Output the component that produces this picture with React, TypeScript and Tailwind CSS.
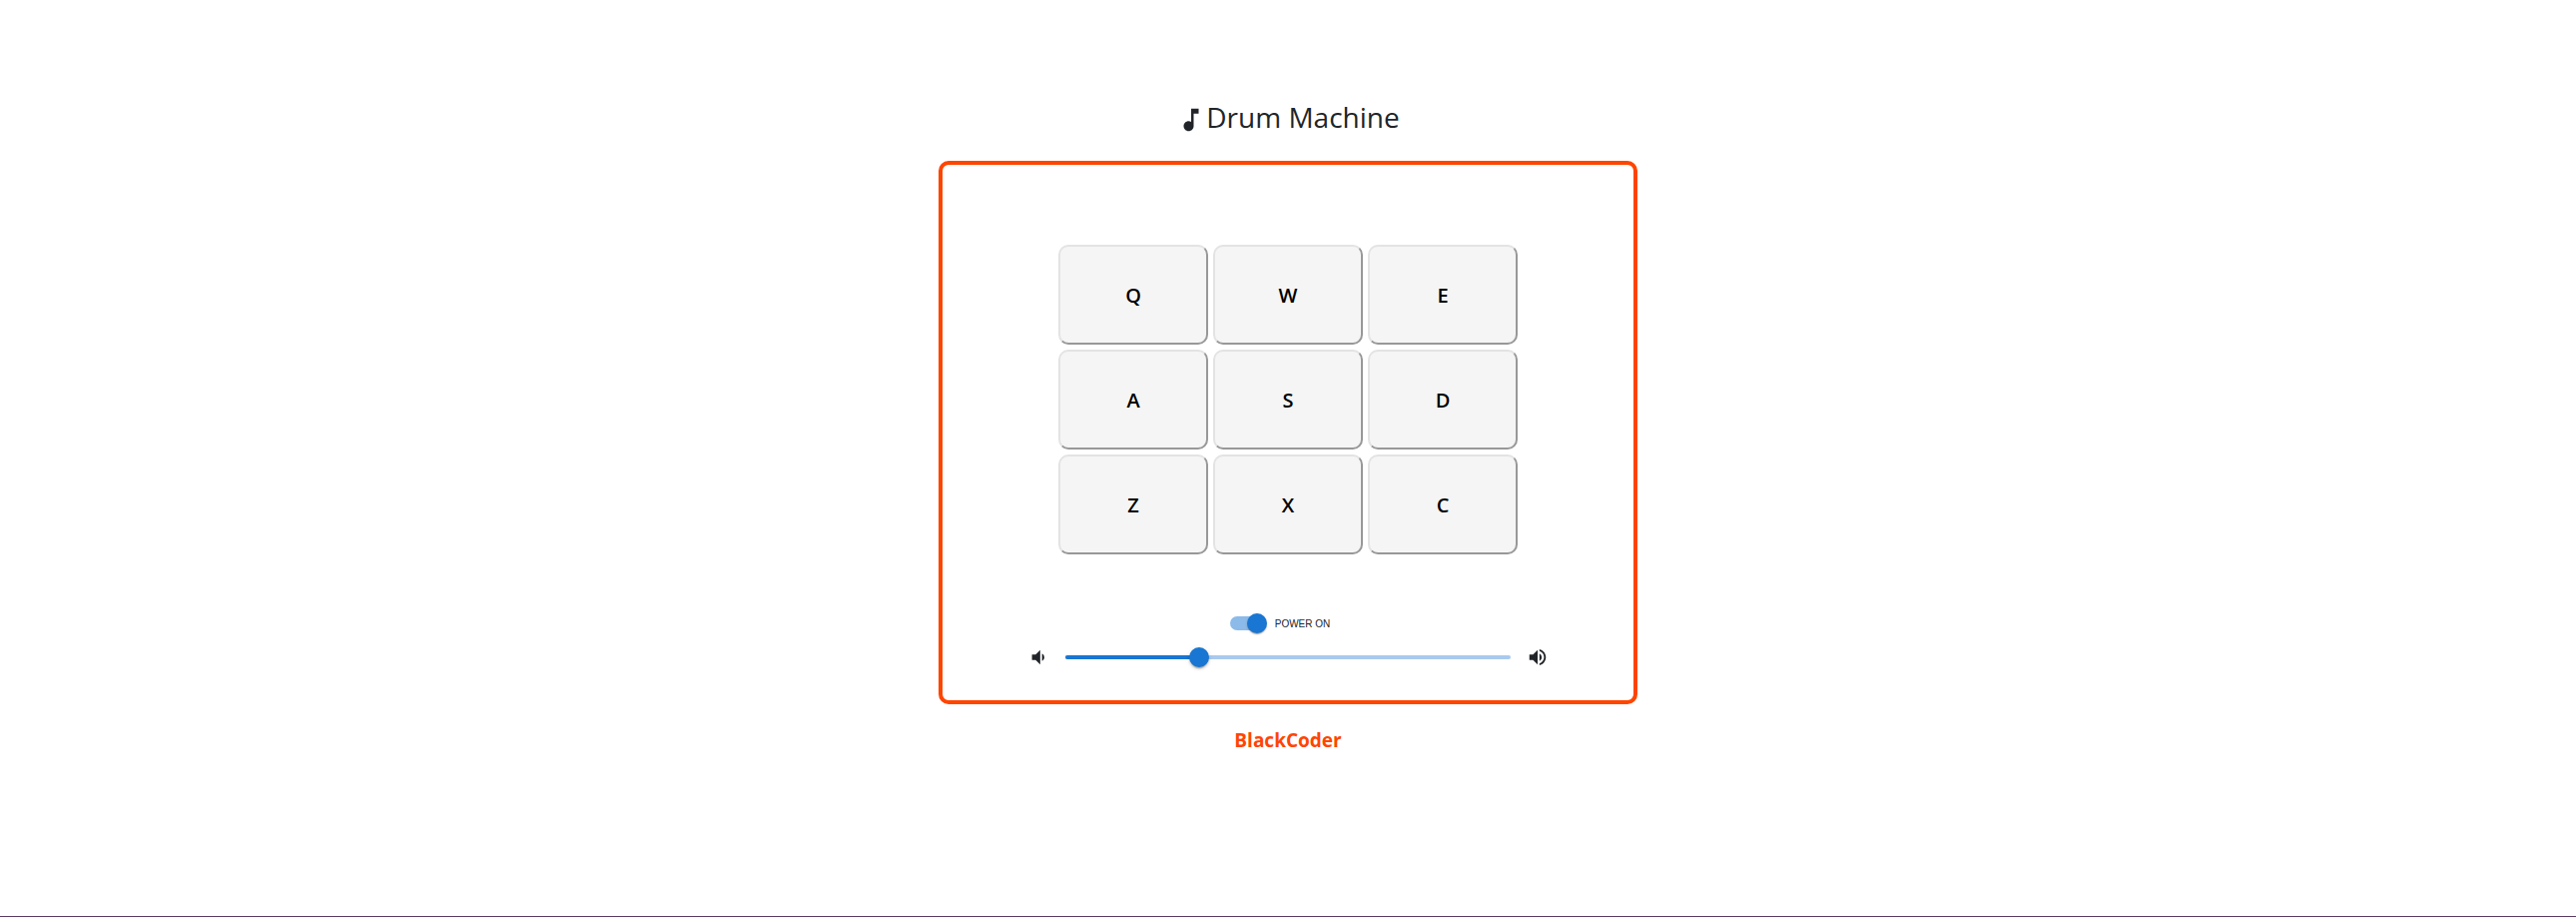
import { useState } from "react";
import { MdMusicNote, MdVolumeDown, MdVolumeUp } from "react-icons/md";

const PADS = ["Q", "W", "E", "A", "S", "D", "Z", "X", "C"];

function Pad({ letter, disabled }: { letter: string; disabled: boolean }) {
  return (
    <button
      type="button"
      disabled={disabled}
      className="h-25 rounded-[10px] border-2 border-t-[#e3e3e3] border-r-[#989898] border-b-[#989898] border-l-[#e3e3e3] bg-[#f5f5f5] pt-0.5 text-xl font-semibold text-black"
    >
      {letter}
    </button>
  );
}

function PowerSwitch({ on, onChange }: { on: boolean; onChange: (on: boolean) => void }) {
  return (
    <label className="flex cursor-pointer items-center gap-2 pr-4 font-['Liberation_Sans',Arial,sans-serif] text-[10px] text-[#212529]">
      <input
        type="checkbox"
        role="switch"
        checked={on}
        onChange={(event) => onChange(event.target.checked)}
        className="peer sr-only"
      />
      <span className="flex h-3.5 w-[37px] items-center rounded-full bg-linear-to-r from-[#8cbae9] from-[34px] to-transparent to-[34px] peer-checked:justify-end">
        <span className="size-5 rounded-full bg-[#1976d2] shadow-[0_2px_1px_-1px_rgba(0,0,0,0.2),0_1px_1px_rgba(0,0,0,0.14),0_1px_3px_rgba(0,0,0,0.12)]" />
      </span>
      {on ? "POWER ON" : "POWER OFF"}
    </label>
  );
}

function VolumeSlider({ value, onChange }: { value: number; onChange: (value: number) => void }) {
  return (
    <div className="relative flex h-7 flex-1 items-center">
      <div className="h-1 w-full rounded-full bg-[#a9caee]">
        <div className="h-1 rounded-full bg-[#1976d2]" style={{ width: `${value}%` }} />
      </div>
      <div
        className="absolute size-5 -translate-x-1/2 rounded-full bg-[#1976d2] shadow-[0_3px_1px_-2px_rgba(0,0,0,0.2),0_2px_2px_rgba(0,0,0,0.14),0_1px_5px_rgba(0,0,0,0.12)]"
        style={{ left: `${value}%` }}
      />
      <input
        type="range"
        min={0}
        max={100}
        value={value}
        aria-label="Volume"
        onChange={(event) => onChange(Number(event.target.value))}
        className="absolute inset-0 w-full cursor-pointer opacity-0"
      />
    </div>
  );
}

export default function App() {
  const [power, setPower] = useState(true);
  const [volume, setVolume] = useState(30);

  return (
    <main className="flex min-h-screen flex-col items-center border-b border-[#5b3a63] bg-white px-4 pt-[99px] pb-16 font-['Open_Sans','Noto_Sans',sans-serif] text-[#212529]">
      <h1 className="mb-[26px] flex items-center text-[28px] leading-9">
        <MdMusicNote className="mt-1.5 size-[30px]" aria-hidden="true" />
        Drum Machine
      </h1>
      <section className="flex w-full max-w-[700px] flex-col items-center rounded-[10px] border-4 border-[#ff4500] px-4 pt-20 pb-[29px]">
        <div className="grid w-full max-w-[460px] grid-cols-3 gap-[5px]">
          {PADS.map((letter) => (
            <Pad key={letter} letter={letter} disabled={!power} />
          ))}
        </div>
        <div className="mt-[59px] flex h-5 items-center">
          <PowerSwitch on={power} onChange={setPower} />
        </div>
        <div className="mt-2.5 flex w-full max-w-[522px] items-center gap-4">
          <MdVolumeDown className="size-[22px]" aria-hidden="true" />
          <VolumeSlider value={volume} onChange={setVolume} />
          <MdVolumeUp className="size-[22px]" aria-hidden="true" />
        </div>
      </section>
      <footer className="mt-[22px] text-[19px] leading-7 font-bold text-[#ff4500]">BlackCoder</footer>
    </main>
  );
}
